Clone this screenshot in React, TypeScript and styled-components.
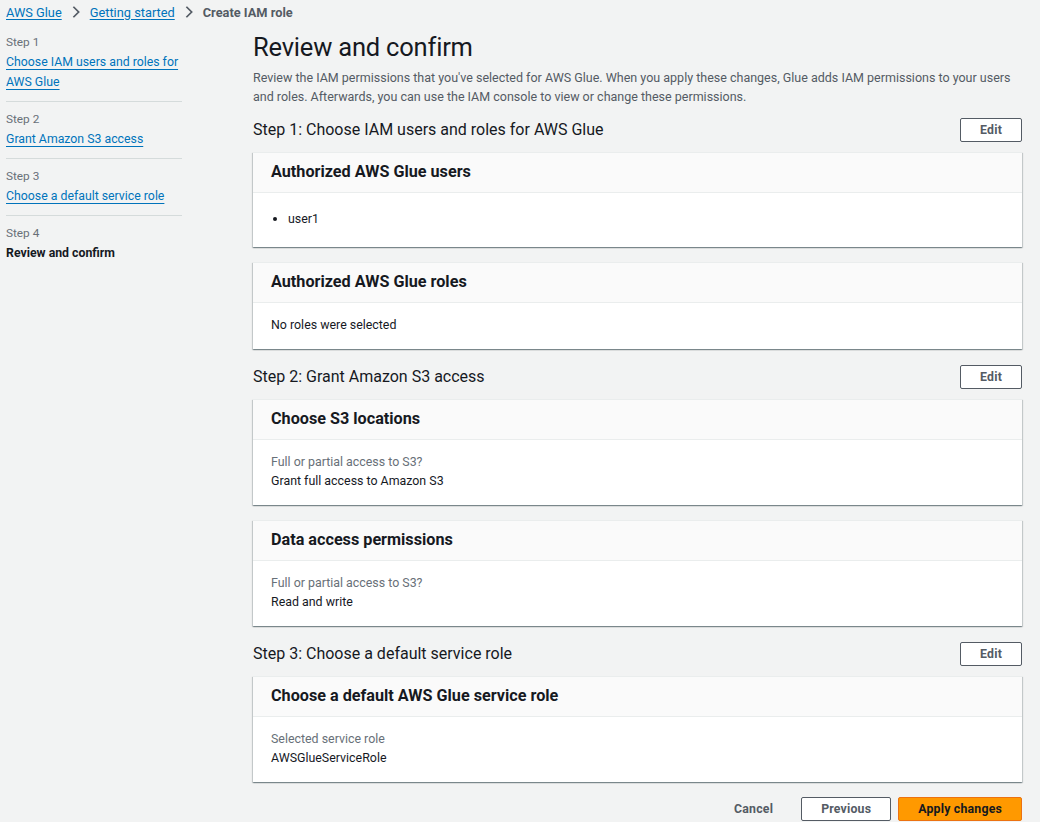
import React, { FC } from "react"
import styled, { createGlobalStyle } from "styled-components"

const GlobalStyle = createGlobalStyle`
  html, body {
    margin: 0;
    padding: 0;
    background: #f2f3f3;
    font-family: Roboto, "Liberation Sans", Arial, sans-serif;
    color: #16191f;
  }
  * { box-sizing: border-box; }
`

const Page = styled.div`
  min-height: 822px;
  padding: 0 18px 0 6px;
`

const Crumbs = styled.nav`
  height: 24px;
  display: flex;
  align-items: center;
  gap: 5px;
  font-size: 12.8px;
`

const CrumbLink = styled.a`
  color: #0073bb;
  text-decoration: underline;
  text-underline-offset: 2px;
`

const CrumbCurrent = styled.span`
  color: #545b64;
  font-weight: 700;
`

const Chevron = styled.svg`
  width: 14px;
  height: 14px;
  margin: 0 2px;
  stroke: #545b64;
  stroke-width: 2;
  fill: none;
`

const Layout = styled.div`
  display: grid;
  grid-template-columns: 176px 769px;
  column-gap: 71px;
  align-items: start;
`

const Side = styled.ol`
  list-style: none;
  margin: 0;
  padding: 0;
`

const SideItem = styled.li`
  padding: 7px 0 9px;
  border-bottom: 1px solid #d5dbdb;
  &:first-child { padding-top: 8px; }
  &:last-child { border-bottom: none; }
`

const StepLabel = styled.div`
  font-size: 11.8px;
  line-height: 20px;
  color: #687078;
`

const SideLink = styled.a`
  display: block;
  font-size: 12.3px;
  line-height: 20px;
  color: #0073bb;
  text-decoration: underline;
  text-underline-offset: 3px;
`

const SideCurrent = styled.div`
  font-size: 12.3px;
  line-height: 20px;
  font-weight: 700;
`

const Main = styled.main`
  padding-top: 7px;
`

const Title = styled.h1`
  margin: 0;
  font-size: 25.5px;
  line-height: 32px;
  font-weight: 400;
  letter-spacing: -0.2px;
`

const Desc = styled.p`
  margin: 5px 0 0;
  font-size: 12.5px;
  line-height: 19px;
  color: #545b64;
`

const SectionHead = styled.div`
  display: flex;
  justify-content: space-between;
  align-items: center;
  margin-top: ${(p: { first?: boolean }) => (p.first ? "12px" : "16px")};
  margin-bottom: 10px;
`

const SectionTitle = styled.h2`
  margin: 0;
  font-size: 16px;
  line-height: 22px;
  font-weight: 400;
`

const Button = styled.button`
  font-family: inherit;
  font-size: 12.3px;
  font-weight: 700;
  height: 24px;
  padding: 0 19px;
  border-radius: 2px;
  border: 1px solid #545b64;
  background: #fff;
  color: #545b64;
  letter-spacing: 0.2px;
`

const PrimaryButton = styled(Button)`
  background: #ff9900;
  border-color: #ec7211;
  color: #16191f;
`

const LinkButton = styled(Button)`
  border-color: transparent;
  background: transparent;
  padding: 0 20px;
`

const Card = styled.section`
  background: #fff;
  box-shadow: 0 1px 1px 0 rgba(0, 28, 36, 0.3), 1px 1px 1px 0 rgba(0, 28, 36, 0.15),
    -1px 1px 1px 0 rgba(0, 28, 36, 0.15);
  border-top: 1px solid #eaeded;
  & + & { margin-top: 15px; }
`

const CardHead = styled.header`
  background: #fafafa;
  border-bottom: 1px solid #eaeded;
  padding: 8px 18px 10px;
`

const CardTitle = styled.h3`
  margin: 0;
  font-size: 16.2px;
  line-height: 21px;
  font-weight: 700;
`

const CardBody = styled.div`
  padding: 12px 18px 15px;
  font-size: 12.4px;
  line-height: 19px;
`

const List = styled.ul`
  margin: 4px 0 4px;
  padding-left: 17px;
`

const Label = styled.div`
  color: #687078;
`

const Footer = styled.div`
  display: flex;
  justify-content: flex-end;
  gap: 7px;
  margin-top: 15px;
`

const ChevronIcon: FC = () => (
  <Chevron viewBox="0 0 16 16">
    <path d="M5 2l6 6-6 6" />
  </Chevron>
)

const steps = [
  "Choose IAM users and roles for AWS Glue",
  "Grant Amazon S3 access",
  "Choose a default service role",
]

const App: FC = () => (
  <>
    <GlobalStyle />
    <Page>
      <Crumbs>
        <CrumbLink href="#">AWS Glue</CrumbLink>
        <ChevronIcon />
        <CrumbLink href="#">Getting started</CrumbLink>
        <ChevronIcon />
        <CrumbCurrent>Create IAM role</CrumbCurrent>
      </Crumbs>
      <Layout>
        <Side>
          {steps.map((s, i) => (
            <SideItem key={s}>
              <StepLabel>Step {i + 1}</StepLabel>
              <SideLink href="#">{s}</SideLink>
            </SideItem>
          ))}
          <SideItem>
            <StepLabel>Step 4</StepLabel>
            <SideCurrent>Review and confirm</SideCurrent>
          </SideItem>
        </Side>
        <Main>
          <Title>Review and confirm</Title>
          <Desc>
            Review the IAM permissions that you've selected for AWS Glue. When you apply these changes, Glue adds IAM
            permissions to your users and roles. Afterwards, you can use the IAM console to view or change these
            permissions.
          </Desc>

          <SectionHead first>
            <SectionTitle>Step 1: Choose IAM users and roles for AWS Glue</SectionTitle>
            <Button>Edit</Button>
          </SectionHead>
          <Card>
            <CardHead><CardTitle>Authorized AWS Glue users</CardTitle></CardHead>
            <CardBody>
              <List><li>user1</li></List>
            </CardBody>
          </Card>
          <Card>
            <CardHead><CardTitle>Authorized AWS Glue roles</CardTitle></CardHead>
            <CardBody>No roles were selected</CardBody>
          </Card>

          <SectionHead>
            <SectionTitle>Step 2: Grant Amazon S3 access</SectionTitle>
            <Button>Edit</Button>
          </SectionHead>
          <Card>
            <CardHead><CardTitle>Choose S3 locations</CardTitle></CardHead>
            <CardBody>
              <Label>Full or partial access to S3?</Label>
              <div>Grant full access to Amazon S3</div>
            </CardBody>
          </Card>
          <Card>
            <CardHead><CardTitle>Data access permissions</CardTitle></CardHead>
            <CardBody>
              <Label>Full or partial access to S3?</Label>
              <div>Read and write</div>
            </CardBody>
          </Card>

          <SectionHead>
            <SectionTitle>Step 3: Choose a default service role</SectionTitle>
            <Button>Edit</Button>
          </SectionHead>
          <Card>
            <CardHead><CardTitle>Choose a default AWS Glue service role</CardTitle></CardHead>
            <CardBody>
              <Label>Selected service role</Label>
              <div>AWSGlueServiceRole</div>
            </CardBody>
          </Card>

          <Footer>
            <LinkButton>Cancel</LinkButton>
            <Button>Previous</Button>
            <PrimaryButton>Apply changes</PrimaryButton>
          </Footer>
        </Main>
      </Layout>
    </Page>
  </>
)

export default App
